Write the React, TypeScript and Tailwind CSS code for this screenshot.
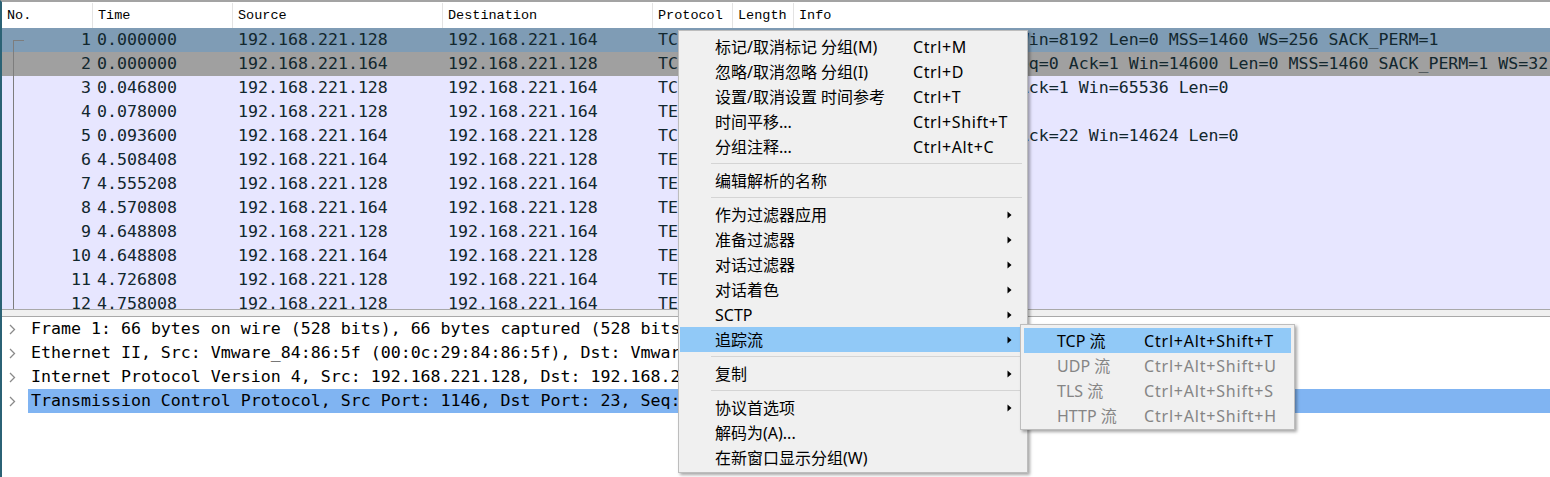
const mono = { fontFamily: "'DejaVu Sans Mono', 'Liberation Mono', monospace" };
const headFont = { fontFamily: "'Liberation Mono', monospace" };
const ui = { fontFamily: "'Noto Sans', 'Noto Sans CJK SC', sans-serif" };

type Pkt = { no: number; time: string; src: string; dst: string; proto: string; len: string; info: string; bg: string };

const A = '192.168.221.128';
const B = '192.168.221.164';

const packets: Pkt[] = [
  { no: 1, time: '0.000000', src: A, dst: B, proto: 'TCP', len: '66', info: '1146 → 23 [SYN] Seq=0 Win=8192 Len=0 MSS=1460 WS=256 SACK_PERM=1', bg: 'bg-[#7f9cb5]' },
  { no: 2, time: '0.000000', src: B, dst: A, proto: 'TCP', len: '66', info: '23 → 1146 [SYN, ACK] Seq=0 Ack=1 Win=14600 Len=0 MSS=1460 SACK_PERM=1 WS=32', bg: 'bg-[#a0a0a0]' },
  { no: 3, time: '0.046800', src: A, dst: B, proto: 'TCP', len: '54', info: '1146 → 23 [ACK] Seq=1 Ack=1 Win=65536 Len=0', bg: 'bg-[#e7e6ff]' },
  { no: 4, time: '0.078000', src: A, dst: B, proto: 'TELNET', len: '75', info: 'Telnet Data ...', bg: 'bg-[#e7e6ff]' },
  { no: 5, time: '0.093600', src: B, dst: A, proto: 'TCP', len: '60', info: '23 → 1146 [ACK] Seq=1 Ack=22 Win=14624 Len=0', bg: 'bg-[#e7e6ff]' },
  { no: 6, time: '4.508408', src: B, dst: A, proto: 'TELNET', len: '66', info: 'Telnet Data ...', bg: 'bg-[#e7e6ff]' },
  { no: 7, time: '4.555208', src: A, dst: B, proto: 'TELNET', len: '57', info: 'Telnet Data ...', bg: 'bg-[#e7e6ff]' },
  { no: 8, time: '4.570808', src: B, dst: A, proto: 'TELNET', len: '60', info: 'Telnet Data ...', bg: 'bg-[#e7e6ff]' },
  { no: 9, time: '4.648808', src: A, dst: B, proto: 'TELNET', len: '57', info: 'Telnet Data ...', bg: 'bg-[#e7e6ff]' },
  { no: 10, time: '4.648808', src: B, dst: A, proto: 'TELNET', len: '60', info: 'Telnet Data ...', bg: 'bg-[#e7e6ff]' },
  { no: 11, time: '4.726808', src: A, dst: B, proto: 'TELNET', len: '57', info: 'Telnet Data ...', bg: 'bg-[#e7e6ff]' },
  { no: 12, time: '4.758008', src: A, dst: B, proto: 'TELNET', len: '60', info: 'Telnet Data ...', bg: 'bg-[#e7e6ff]' },
];

const details = [
  'Frame 1: 66 bytes on wire (528 bits), 66 bytes captured (528 bits) on interface 0',
  'Ethernet II, Src: Vmware_84:86:5f (00:0c:29:84:86:5f), Dst: Vmware_c0:00:08 (00:50:56:c0:00:08)',
  'Internet Protocol Version 4, Src: 192.168.221.128, Dst: 192.168.221.164',
  'Transmission Control Protocol, Src Port: 1146, Dst Port: 23, Seq: 0, Len: 0',
];

type Item =
  | { sep: true }
  | { sep?: false; label: string; key?: string; sub?: boolean; active?: boolean };

const menu: Item[] = [
  { label: '标记/取消标记 分组(M)', key: 'Ctrl+M' },
  { label: '忽略/取消忽略 分组(I)', key: 'Ctrl+D' },
  { label: '设置/取消设置 时间参考', key: 'Ctrl+T' },
  { label: '时间平移...', key: 'Ctrl+Shift+T' },
  { label: '分组注释...', key: 'Ctrl+Alt+C' },
  { sep: true },
  { label: '编辑解析的名称' },
  { sep: true },
  { label: '作为过滤器应用', sub: true },
  { label: '准备过滤器', sub: true },
  { label: '对话过滤器', sub: true },
  { label: '对话着色', sub: true },
  { label: 'SCTP', sub: true },
  { label: '追踪流', sub: true, active: true },
  { sep: true },
  { label: '复制', sub: true },
  { sep: true },
  { label: '协议首选项', sub: true },
  { label: '解码为(A)...' },
  { label: '在新窗口显示分组(W)' },
];

const streams = [
  { label: 'TCP 流', key: 'Ctrl+Alt+Shift+T', on: true },
  { label: 'UDP 流', key: 'Ctrl+Alt+Shift+U' },
  { label: 'TLS 流', key: 'Ctrl+Alt+Shift+S' },
  { label: 'HTTP 流', key: 'Ctrl+Alt+Shift+H' },
];

function SubArrow() {
  return (
    <svg width="5" height="8" viewBox="0 0 5 8" className="ml-auto mr-[14px]">
      <path d="M0.5 0.5 L4.5 4 L0.5 7.5 Z" fill="#000" />
    </svg>
  );
}

function Chevron() {
  return (
    <svg width="7" height="11" viewBox="0 0 7 11">
      <path d="M1 1 L5.5 5.5 L1 10" fill="none" stroke="#8a8a8a" strokeWidth="1.3" />
    </svg>
  );
}

export default function App() {
  const heads = [
    { t: 'No.', w: 'w-[91px]' },
    { t: 'Time', w: 'w-[140px]' },
    { t: 'Source', w: 'w-[210px]' },
    { t: 'Destination', w: 'w-[210px]' },
    { t: 'Protocol', w: 'w-[80px]' },
    { t: 'Length', w: 'w-[61px]' },
  ];

  return (
    <div className="relative w-[1550px] h-[477px] overflow-hidden bg-white">
      <div className="flex flex-col h-full border-l-2 border-t-2 border-l-[#2b6275] border-t-[#a3a3a3]">
        {/* column header */}
        <div className="flex h-[26px] bg-white text-[13.5px] text-black shrink-0 pt-[1px]" style={headFont}>
          {heads.map((h) => (
            <div key={h.t} className={`${h.w} shrink-0 pl-[5px] leading-[25px] border-r border-[#e3e3e3]`}>
              {h.t}
            </div>
          ))}
          <div className="flex-1 pl-[5px] leading-[25px]">Info</div>
        </div>

        {/* packet list */}
        <div className="relative h-[281px] overflow-hidden shrink-0 text-[16.6px] text-[#12272e]" style={mono}>
          {packets.map((p) => (
            <div key={p.no} className={`flex h-[24px] leading-[24px] whitespace-nowrap ${p.bg}`}>
              <div className="w-[91px] shrink-0 text-right pr-[2px]">{p.no}</div>
              <div className="w-[140px] shrink-0 pl-[4px]">{p.time}</div>
              <div className="w-[210px] shrink-0 pl-[5px]">{p.src}</div>
              <div className="w-[210px] shrink-0 pl-[5px]">{p.dst}</div>
              <div className="w-[80px] shrink-0 pl-[5px]">{p.proto}</div>
              <div className="w-[61px] shrink-0 pr-[4px] text-right">{p.len}</div>
              <div className="flex-1 pl-[5px] overflow-hidden">{p.info}</div>
            </div>
          ))}
          <div className="absolute left-[11px] top-[12px] bottom-0 w-px bg-[#7d7d7d]" />
          <div className="absolute left-[11px] top-[12px] w-[11px] h-px bg-[#7d7d7d]" />
        </div>

        {/* splitter */}
        <div className="h-[8px] shrink-0 bg-[#f0f0f0] border-t border-b border-[#a9a9a9]" />

        {/* packet details */}
        <div className="flex-1 bg-white text-[16.6px] text-black" style={mono}>
          {details.map((d, i) => (
            <div key={i} className="flex h-[24px] leading-[24px] whitespace-nowrap">
              <div className="w-[26px] shrink-0 flex items-center pl-[7px]">
                <Chevron />
              </div>
              <div className={`flex-1 pl-[3px] overflow-hidden ${i === 3 ? 'bg-[#80b4f2]' : ''}`}>{d}</div>
            </div>
          ))}
        </div>
      </div>

      {/* context menu */}
      <div
        className="absolute left-[678px] top-[30px] w-[350px] bg-[#f0f0f0] border border-[#bdbdbd] pt-[3px] pb-[2px] px-[1px] shadow-[2px_2px_3px_rgba(0,0,0,0.35)] text-[16px] text-black"
        style={ui}
      >
        {menu.map((m, i) =>
          m.sep ? (
            <div key={i} className="h-[9px] flex items-center pl-[31px] pr-[4px]">
              <div className="w-full h-px bg-[#d4d4d4]" />
            </div>
          ) : (
            <div
              key={i}
              className={`h-[25px] flex items-center pl-[35px] whitespace-nowrap ${m.active ? 'bg-[#91c9f7]' : ''}`}
            >
              <span className="w-[198px] shrink-0">{m.label}</span>
              {m.key && <span className="tracking-[0.6px]">{m.key}</span>}
              {m.sub && <SubArrow />}
            </div>
          )
        )}
      </div>

      {/* stream submenu */}
      <div
        className="absolute left-[1020px] top-[324px] w-[275px] bg-[#f0f0f0] border border-[#bdbdbd] pt-[3px] pb-[1px] px-[3px] shadow-[2px_2px_3px_rgba(0,0,0,0.35)] text-[16px]"
        style={ui}
      >
        {streams.map((s) => (
          <div
            key={s.label}
            className={`h-[25px] flex items-center pl-[33px] whitespace-nowrap ${s.on ? 'bg-[#91c9f7] text-black' : 'text-[#858585]'}`}
          >
            <span className="w-[87px] shrink-0">{s.label}</span>
            <span className="tracking-[0.8px]">{s.key}</span>
          </div>
        ))}
      </div>
    </div>
  );
}
